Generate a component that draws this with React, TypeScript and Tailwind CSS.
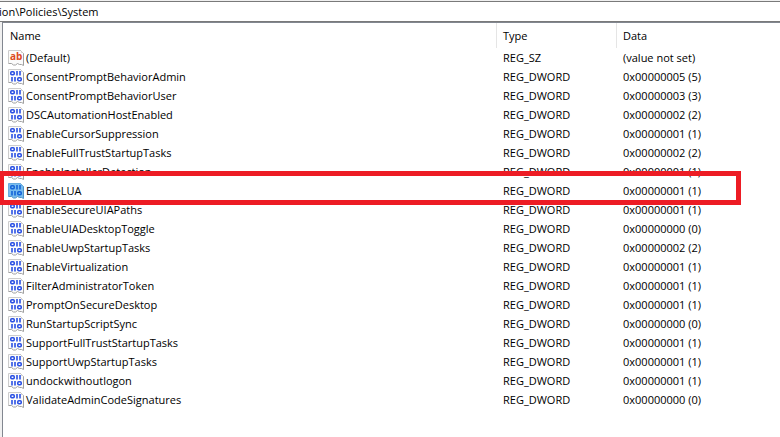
interface RegValue {
  name: string
  type: string
  data: string
}

const selected = 'EnableLUA'

const values: RegValue[] = [
  { name: '(Default)', type: 'REG_SZ', data: '(value not set)' },
  { name: 'ConsentPromptBehaviorAdmin', type: 'REG_DWORD', data: '0x00000005 (5)' },
  { name: 'ConsentPromptBehaviorUser', type: 'REG_DWORD', data: '0x00000003 (3)' },
  { name: 'DSCAutomationHostEnabled', type: 'REG_DWORD', data: '0x00000002 (2)' },
  { name: 'EnableCursorSuppression', type: 'REG_DWORD', data: '0x00000001 (1)' },
  { name: 'EnableFullTrustStartupTasks', type: 'REG_DWORD', data: '0x00000002 (2)' },
  { name: 'EnableInstallerDetection', type: 'REG_DWORD', data: '0x00000001 (1)' },
  { name: 'EnableLUA', type: 'REG_DWORD', data: '0x00000001 (1)' },
  { name: 'EnableSecureUIAPaths', type: 'REG_DWORD', data: '0x00000001 (1)' },
  { name: 'EnableUIADesktopToggle', type: 'REG_DWORD', data: '0x00000000 (0)' },
  { name: 'EnableUwpStartupTasks', type: 'REG_DWORD', data: '0x00000002 (2)' },
  { name: 'EnableVirtualization', type: 'REG_DWORD', data: '0x00000001 (1)' },
  { name: 'FilterAdministratorToken', type: 'REG_DWORD', data: '0x00000001 (1)' },
  { name: 'PromptOnSecureDesktop', type: 'REG_DWORD', data: '0x00000001 (1)' },
  { name: 'RunStartupScriptSync', type: 'REG_DWORD', data: '0x00000000 (0)' },
  { name: 'SupportFullTrustStartupTasks', type: 'REG_DWORD', data: '0x00000001 (1)' },
  { name: 'SupportUwpStartupTasks', type: 'REG_DWORD', data: '0x00000001 (1)' },
  { name: 'undockwithoutlogon', type: 'REG_DWORD', data: '0x00000001 (1)' },
  { name: 'ValidateAdminCodeSignatures', type: 'REG_DWORD', data: '0x00000000 (0)' },
]

function ValueIcon({ type, active }: { type: string; active: boolean }) {
  const paper = active ? '#78bcee' : '#fbfbfb'
  const light = active ? '#68acdf' : '#cccccc'
  const dark = active ? '#4f93c6' : '#a0a0a0'
  const ink = active ? '#1464d8' : '#2a50e4'

  return (
    <svg width="16" height="16" viewBox="0 0 16 16" className="shrink-0" aria-hidden="true">
      <path d="M.5.5h12l3 3v12l-2-1h-2l-2-1-2 1.5h-2l-2-1.5h-3z" fill={paper} />
      <path d="M.5 13.5V.5h12" fill="none" stroke={light} />
      <path d="M12.5.5l3 3v12l-2-1h-2l-2-1-2 1.5h-2l-2-1.5h-3" fill="none" stroke={dark} />
      <path d="M13.5 1v1.5H15" fill="none" stroke={light} />
      {type === 'REG_SZ' ? (
        <text x="2" y="10" fontSize="10" fontWeight="bold" fontFamily="Open Sans, sans-serif" fill="#dc4a22">
          ab
        </text>
      ) : (
        <g fill="none" stroke={ink} strokeWidth="1.6">
          <rect x="2.8" y="2.8" width="3.4" height="3" rx="1" />
          <path d="M9 2v4.6M12 2v4.6" />
          <path d="M4 8v4.6M7 8v4.6" />
          <rect x="9.8" y="8.8" width="3.4" height="3" rx="1" />
        </g>
      )}
    </svg>
  )
}

export default function App() {
  return (
    <div className={`flex min-h-screen flex-col overflow-hidden bg-[#f0f0f0] font-["Open_Sans",sans-serif] text-[11px] text-black`}>
      {/* address bar */}
      <div className="mt-px flex h-[21px] items-center overflow-hidden border-y border-[#7a7a7a] bg-white">
        <span className="-ml-px leading-5">ion\Policies\System</span>
      </div>

      {/* value list */}
      <div className="ml-0.5 grow border-t border-l border-[#828790] bg-white">
        <table className="w-full table-fixed border-separate border-spacing-0 text-left">
          <thead>
            <tr className="h-[25px]">
              <th className="w-[494px] border-r border-[#e5e5e5] p-0 pt-0.5 pl-[7px] font-normal">Name</th>
              <th className="w-[120px] border-r border-[#e5e5e5] p-0 pt-0.5 pl-1.5 font-normal">Type</th>
              <th className="p-0 pt-0.5 pl-1.5 font-normal">Data</th>
            </tr>
          </thead>
          <tbody>
            {values.map((v) => (
              <tr key={v.name} className="relative h-[19px] leading-4">
                <td className="p-0 pl-[5px]">
                  <div className="flex items-center gap-0.5">
                    <ValueIcon type={v.type} active={v.name === selected} />
                    <span>{v.name}</span>
                  </div>
                  {/* red frame round the selected row */}
                  {v.name === selected && (
                    <div className="pointer-events-none absolute -top-2.5 right-[39px] -left-1 z-10 h-[34px] border-[5px] border-[#ed1c24]"></div>
                  )}
                </td>
                <td className="p-0 pl-1.5">{v.type}</td>
                <td className="p-0 pl-1.5">{v.data}</td>
              </tr>
            ))}
          </tbody>
        </table>
      </div>
    </div>
  )
}
